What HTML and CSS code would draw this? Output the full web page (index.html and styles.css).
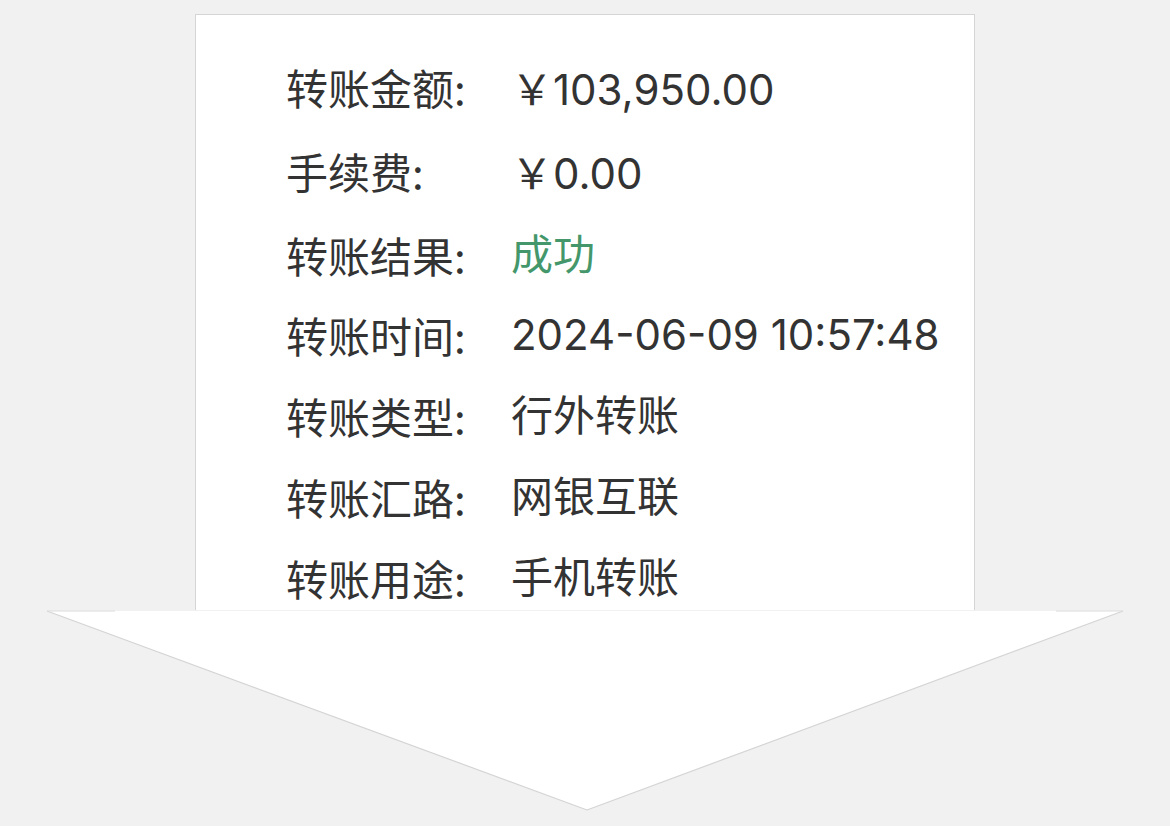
FILE: index.html
```html
<!DOCTYPE html>
<html lang="zh-CN">

<head>
    <meta charset="UTF-8">
    <title>转账详情</title>
    <link rel="stylesheet" href="styles.css">
</head>

<body class="page">
    <div class="receipt">
        <div class="detail">
            <div class="label">转账金额:</div>
            <div class="value"><span class="yen">￥</span>103,950.00</div>
            <div class="label">手续费:</div>
            <div class="value"><span class="yen">￥</span>0.00</div>
            <div class="label">转账结果:</div>
            <div class="value ok">成功</div>
            <div class="label">转账时间:</div>
            <div class="value">2024-06-09 10:57:48</div>
            <div class="label">转账类型:</div>
            <div class="value">行外转账</div>
            <div class="label">转账汇路:</div>
            <div class="value">网银互联</div>
            <div class="label">转账用途:</div>
            <div class="value">手机转账</div>
        </div>
    </div>
    <svg class="arrow" width="1170" height="216" viewBox="0 0 1170 216">
        <polygon points="47,1 1123,1 587,200" fill="#fff" />
        <line x1="47" y1="1" x2="587" y2="200" stroke="#d4d4d4" stroke-width="1.2" />
        <line x1="1123" y1="1" x2="587" y2="200" stroke="#d4d4d4" stroke-width="1.2" />
        <line x1="47" y1="1" x2="115" y2="1" stroke="#dcdcdc" stroke-width="1" />
        <line x1="1056" y1="1" x2="1123" y2="1" stroke="#dcdcdc" stroke-width="1" />
    </svg>
</body>

</html>
```

FILE: styles.css
```css
* {
    margin: 0;
    padding: 0;
    box-sizing: border-box;
}

.page {
    background: #f1f1f1;
    padding-top: 14px;
    font-family: "Noto Sans CJK SC", sans-serif;
    color: #333;
}

.receipt {
    width: 780px;
    margin: 0 auto;
    background: #fff;
    border: 1px solid #d5d5d5;
    border-bottom: none;
    padding: 44px 0 4px 90px;
}

.detail {
    display: grid;
    grid-template-columns: 225px auto;
    row-gap: 24.8px;
    font-size: 42px;
    line-height: 56px;
}

.value {
    font-family: "Inter", "Noto Sans CJK SC", sans-serif;
}

.yen {
    font-family: "Noto Sans CJK SC", sans-serif;
}

.ok {
    color: #44976a;
}

.arrow {
    display: block;
}
```
